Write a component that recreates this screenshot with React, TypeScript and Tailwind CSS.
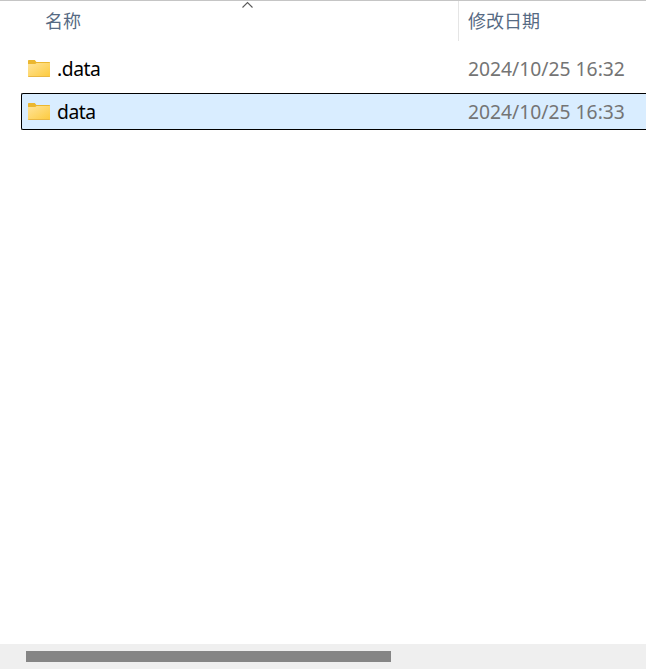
function Folder({ id }: { id: string }) {
  return (
    <svg width="24" height="20" viewBox="0 0 24 20" className="block shrink-0">
      <defs>
        <linearGradient id={id} x1="0" y1="0" x2="1" y2="1">
          <stop offset="0" stopColor="#ffe49a" />
          <stop offset="1" stopColor="#fdca3c" />
        </linearGradient>
      </defs>
      <path d="M1 9V1.8Q1 1 1.8 1H7.8L9.4 3H22.4Q23 3 23 3.6V9Z" fill="#ebb730" />
      <path d="M1 5H8.2L9.6 4H23V17.4Q23 18 22.4 18H1.6Q1 18 1 17.4Z" fill={`url(#${id})`} />
      <path d="M1.4 17.5H22.6" stroke="#e9b744" strokeWidth="1" />
    </svg>
  );
}

const rows = [
  { name: ".data", date: "2024/10/25 16:32", selected: false },
  { name: "data", date: "2024/10/25 16:33", selected: true },
];

export default function App() {
  return (
    <div className="flex h-[669px] w-[646px] flex-col overflow-hidden border-t border-[#c5c5c5] bg-white font-['Noto_Sans','Noto_Sans_CJK_SC',sans-serif]">
      <header className="flex h-[40px] shrink-0 font-['Noto_Sans_CJK_SC',sans-serif] text-[18px] leading-[38px] text-[#566a83]">
        <div className="relative w-[459px] border-r border-[#e5e5e5] pl-[45px]">
          名称
          <svg className="absolute left-[241px] top-0" width="13" height="8" viewBox="0 0 13 8">
            <path d="M1.5 6.5L6.5 1.5L11.5 6.5" fill="none" stroke="#5a5a5a" strokeWidth="1.1" />
          </svg>
        </div>
        <div className="pl-[9px]">修改日期</div>
      </header>
      <main className="flex flex-1 flex-col gap-[6px] pl-[21px] pt-[9px]">
        {rows.map((row) => (
          <div
            key={row.name}
            className={`flex h-[37px] items-center rounded-l-[2px] border-y border-l pl-[5px] text-[19.3px] leading-[35px] ${
              row.selected ? "border-black bg-[#d9edff]" : "border-transparent"
            }`}
          >
            <Folder id={row.selected ? "folder-selected" : "folder-plain"} />
            <span className="w-[417px] pl-[6px] tracking-[-0.45px] text-black">{row.name}</span>
            <span className="whitespace-nowrap text-[#747474]">{row.date}</span>
          </div>
        ))}
      </main>
      <footer className="h-[25px] shrink-0 bg-[#efefef] pl-[26px] pt-[7px]">
        <div className="h-[11px] w-[365px] bg-[#858585]" />
      </footer>
    </div>
  );
}
